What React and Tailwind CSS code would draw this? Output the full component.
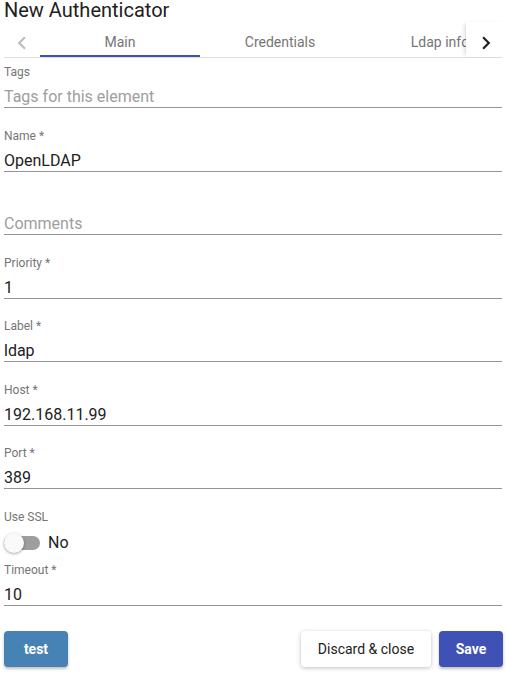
import { MdChevronLeft, MdChevronRight } from "react-icons/md";

const tabs = ["Main", "Credentials", "Ldap info", "Advanced"];

function Field({ label, value, placeholder, gap }) {
  return (
    <div className={gap}>
      <div className="h-[14px] text-[12px] leading-[14px] text-[#757575]">{label}</div>
      <div className="mt-[8px] border-b border-[#949494]">
        <input
          readOnly
          defaultValue={value}
          placeholder={placeholder}
          className="block h-5 w-full bg-transparent p-0 text-[16px] leading-[20px] text-[#212121] outline-none placeholder:text-[#9e9e9e]"
        />
      </div>
    </div>
  );
}

export default function App() {
  return (
    <div className="min-h-[674px] bg-white px-1 font-['Roboto',sans-serif]">
      <h1 className="text-[20px] leading-[20px] font-normal text-[#212121]">New Authenticator</h1>

      {/* tabs */}
      <div className="-mr-1 mt-[2px] flex h-[35px]">
        <button className="flex w-9 items-center justify-center pt-[6px] text-[#bdbdbd]">
          <MdChevronLeft size={26} />
        </button>
        <div className="flex flex-1 overflow-hidden">
          {tabs.map((t, i) => (
            <div
              key={t}
              className={`flex w-40 shrink-0 items-center justify-center pt-[6px] text-[14px] leading-[20px] text-[#757575] ${
                i === 0 ? "border-b-2 border-[#3f51b5]" : "border-b-2 border-transparent"
              }`}
            >
              {t}
            </div>
          ))}
        </div>
        <button className="flex w-10 items-center justify-center bg-white pt-[6px] text-[#212121] shadow-[-3px_0_4px_-2px_rgba(0,0,0,0.18)]">
          <MdChevronRight size={26} />
        </button>
      </div>
      <div className="h-px bg-[#e0e0e0]" />

      <Field gap="mt-[7px]" label="Tags" placeholder="Tags for this element" />
      <Field gap="mt-[21px]" label="Name *" value="OpenLDAP" />
      <Field gap="mt-[20px]" label="" placeholder="Comments" />
      <Field gap="mt-[21px]" label="Priority *" value="1" />
      <Field gap="mt-[20px]" label="Label *" value="ldap" />
      <Field gap="mt-[21px]" label="Host *" value="192.168.11.99" />
      <Field gap="mt-[20px]" label="Port *" value="389" />

      <div className="mt-[21px]">
        <div className="h-[14px] text-[12px] leading-[14px] text-[#757575]">Use SSL</div>
        <div className="mt-[7px] flex h-6 items-center">
          <div className="relative h-[14px] w-9 rounded-full bg-[#9e9e9e]">
            <div className="absolute -top-[3px] left-0 h-5 w-5 rounded-full bg-[#fafafa] shadow-[0_1px_3px_rgba(0,0,0,0.35)]" />
          </div>
          <span className="ml-2 text-[16px] leading-[20px] text-[#212121]">No</span>
        </div>
      </div>
      <Field gap="mt-[8px]" label="Timeout *" value="10" />

      <div className="-mr-px mt-[25px] flex items-center">
        <button className="h-9 w-16 rounded bg-[#4682b4] text-[14px] font-bold text-white shadow-[0_2px_3px_rgba(0,0,0,0.25)]">
          test
        </button>
        <div className="ml-auto flex gap-2">
          <button className="h-9 w-[130px] rounded bg-white text-[14px] font-normal text-[#212121] shadow-[0_1px_4px_rgba(0,0,0,0.25)]">
            Discard &amp; close
          </button>
          <button className="h-9 w-16 rounded bg-[#3f51b5] text-[14px] font-bold text-white shadow-[0_2px_3px_rgba(0,0,0,0.25)]">
            Save
          </button>
        </div>
      </div>
    </div>
  );
}
